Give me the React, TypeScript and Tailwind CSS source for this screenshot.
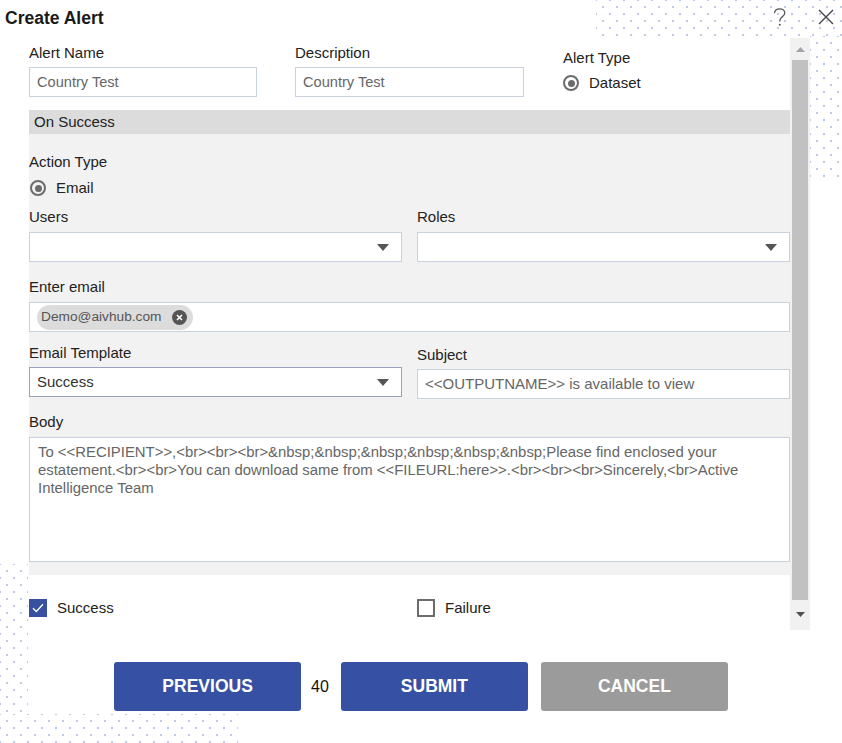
import React from "react";

const DOTS =
  "bg-[radial-gradient(circle,#c3c9e8_1px,transparent_1.6px),radial-gradient(circle,#c3c9e8_1px,transparent_1.6px)] bg-[length:14px_14px] bg-[position:0_0,7px_7px]";

function Caret() {
  return (
    <svg width="12" height="7" viewBox="0 0 12 7">
      <path d="M0 0 L12 0 L6 7 Z" fill="#555" />
    </svg>
  );
}

function Radio({ label }: { label: string }) {
  return (
    <div className="flex items-center h-4">
      <div className="w-[16px] h-[16px] rounded-full border-2 border-[#6b6b6b] flex items-center justify-center">
        <div className="w-[7px] h-[7px] rounded-full bg-[#6b6b6b]" />
      </div>
      <span className="ml-[10px] text-[15px] leading-4 text-[#222]">{label}</span>
    </div>
  );
}

function Label({ children }: { children: React.ReactNode }) {
  return <div className="text-[15px] leading-4 text-[#222]">{children}</div>;
}

function Select({ value, dark }: { value?: string; dark?: boolean }) {
  return (
    <div
      className={
        "h-[30px] bg-white border flex items-center justify-between pl-[7px] pr-[12px] " +
        (dark ? "border-[#97a3b8]" : "border-[#c9d1de]")
      }
    >
      <span className="text-[15px] text-[#333]">{value ?? ""}</span>
      <Caret />
    </div>
  );
}

export default function App() {
  return (
    <div className="relative w-[842px] h-[743px] bg-white overflow-hidden font-['Liberation_Sans',Arial,sans-serif]">
      {/* decorative dot patterns */}
      <div className={"absolute left-[596px] top-0 w-[246px] h-[36px] " + DOTS} />
      <div className={"absolute left-[810px] top-[36px] w-[32px] h-[146px] " + DOTS} />
      <div className={"absolute left-0 top-[564px] w-[28px] h-[152px] " + DOTS} />
      <div className={"absolute left-0 top-[714px] w-[238px] h-[29px] " + DOTS} />

      <div className="relative z-10 flex flex-col">
        {/* title bar */}
        <div className="h-[38px] flex items-center justify-between pl-[5px] pr-[8px]">
          <span className="text-[17.5px] font-bold text-[#1a1a1a] mt-[-2px]">Create Alert</span>
          <div className="flex items-center mt-[-4px]">
            <svg width="14" height="19" viewBox="0 0 14 19" className="mr-[31px]">
              <path
                d="M1.5 5.2 C1.5 2.4 3.6 0.8 6.6 0.8 C9.6 0.8 11.8 2.6 11.8 5.1 C11.8 7.4 10.2 8.4 8.6 9.5 C7.2 10.5 6.8 11.3 6.8 13.4"
                stroke="#555"
                strokeWidth="1.3"
                fill="none"
              />
              <circle cx="6.8" cy="16.8" r="1" fill="#555" />
            </svg>
            <svg width="16" height="16" viewBox="0 0 16 16">
              <path d="M1 1 L15 15 M15 1 L1 15" stroke="#444" strokeWidth="1.4" />
            </svg>
          </div>
        </div>

        {/* scroll area */}
        <div className="flex h-[592px]">
          <div className="w-[790px] pl-[29px] overflow-hidden">
            {/* top section */}
            <div className="flex pt-[7px]">
              <div className="w-[228px]">
                <Label>Alert Name</Label>
                <div className="mt-[6px] h-[30px] bg-white border border-[#c9d1de] flex items-center pl-[7px] pt-[2px] text-[14.6px] text-[#666]">
                  Country Test
                </div>
              </div>
              <div className="w-[229px] ml-[38px]">
                <Label>Description</Label>
                <div className="mt-[6px] h-[30px] bg-white border border-[#c9d1de] flex items-center pl-[7px] pt-[2px] text-[14.6px] text-[#666]">
                  Country Test
                </div>
              </div>
              <div className="ml-[39px] pt-[5px]">
                <Label>Alert Type</Label>
                <div className="mt-[9px]">
                  <Radio label="Dataset" />
                </div>
              </div>
            </div>

            {/* On success header */}
            <div className="mt-[13px] h-[24px] bg-[#dcdcdc] pl-[5px] flex items-center text-[15px] text-[#222]">
              On Success
            </div>

            {/* gray panel */}
            <div className="bg-[#f2f2f2] pt-[20px] pb-[13px]">
              <Label>Action Type</Label>
              <div className="mt-[10px] ml-[1px]">
                <Radio label="Email" />
              </div>

              <div className="mt-[13px] grid grid-cols-[373px_373px] gap-x-[15px]">
                <div>
                  <Label>Users</Label>
                  <div className="mt-[7px]">
                    <Select />
                  </div>
                </div>
                <div>
                  <Label>Roles</Label>
                  <div className="mt-[7px]">
                    <Select />
                  </div>
                </div>
              </div>

              <div className="mt-[17px]">
                <Label>Enter email</Label>
                <div className="mt-[7px] h-[30px] bg-white border border-[#c9d1de] flex items-center pl-[7px]">
                  <div className="h-[25px] rounded-full bg-[#dcdcdc] flex items-center pl-[4px] pr-[6px]">
                    <span className="text-[13.7px] text-[#555]">Demo@aivhub.com</span>
                    <div className="ml-[11px] w-[15px] h-[15px] rounded-full bg-[#555] flex items-center justify-center">
                      <svg width="7" height="7" viewBox="0 0 7 7">
                        <path d="M1 1 L6 6 M6 1 L1 6" stroke="#fff" strokeWidth="1.6" />
                      </svg>
                    </div>
                  </div>
                </div>
              </div>

              <div className="mt-[13px] grid grid-cols-[373px_373px] gap-x-[15px]">
                <div>
                  <Label>Email Template</Label>
                  <div className="mt-[6px]">
                    <Select value="Success" dark />
                  </div>
                </div>
                <div className="pt-[2px]">
                  <Label>Subject</Label>
                  <div className="mt-[6px] h-[30px] bg-white border border-[#c9d1de] flex items-center pl-[7px] text-[15px] text-[#666]">
                    {"<<OUTPUTNAME>> is available to view"}
                  </div>
                </div>
              </div>

              <div className="mt-[15px]">
                <Label>Body</Label>
                <div className="mt-[7px] h-[125px] bg-white border border-[#c9d1de] pl-[8px] pr-[8px] pt-[5px] text-[14.9px] leading-[18px] text-[#666]">
                  {
                    "To <<RECIPIENT>>,<br><br><br>&nbsp;&nbsp;&nbsp;&nbsp;&nbsp;&nbsp;Please find enclosed your estatement.<br><br>You can download same from <<FILEURL:here>>.<br><br><br>Sincerely,<br>Active Intelligence Team"
                  }
                </div>
              </div>
            </div>

            {/* checkboxes */}
            <div className="mt-[24px] grid grid-cols-[373px_373px] gap-x-[15px]">
              <div className="flex items-center h-[18px]">
                <div className="w-[18px] h-[18px] bg-[#3750a0] flex items-center justify-center">
                  <svg width="12" height="10" viewBox="0 0 12 10">
                    <path d="M1 5.2 L4.3 8.4 L11 1.2" stroke="#fff" strokeWidth="1.4" fill="none" />
                  </svg>
                </div>
                <span className="ml-[10px] text-[15px] text-[#222]">Success</span>
              </div>
              <div className="flex items-center h-[18px]">
                <div className="w-[18px] h-[18px] bg-white border-2 border-[#6b6b6b]" />
                <span className="ml-[10px] text-[15px] text-[#222]">Failure</span>
              </div>
            </div>
          </div>

          {/* scrollbar */}
          <div className="w-[20px] bg-[#f1f1f1] flex flex-col">
            <div className="h-[22px] flex items-center justify-center">
              <svg width="9" height="5" viewBox="0 0 9 5">
                <path d="M0 5 L9 5 L4.5 0 Z" fill="#a3a3a3" />
              </svg>
            </div>
            <div className="mx-[2px] h-[540px] bg-[#c1c1c1]" />
            <div className="flex-1 flex items-center justify-center pb-[2px]">
              <svg width="9" height="5" viewBox="0 0 9 5">
                <path d="M0 0 L9 0 L4.5 5 Z" fill="#505050" />
              </svg>
            </div>
          </div>
        </div>

        {/* buttons */}
        <div className="pt-[32px] flex justify-center items-center">
          <button className="w-[187px] h-[49px] rounded-[3px] bg-[#3651a3] text-white text-[17.5px] font-bold">
            PREVIOUS
          </button>
          <span className="ml-[10px] mr-[12px] text-[16px] text-[#111]">40</span>
          <button className="w-[187px] h-[49px] rounded-[3px] bg-[#3651a3] text-white text-[17.5px] font-bold">
            SUBMIT
          </button>
          <button className="ml-[13px] w-[187px] h-[49px] rounded-[3px] bg-[#9b9b9b] text-white text-[17.5px] font-bold">
            CANCEL
          </button>
        </div>
      </div>
    </div>
  );
}
